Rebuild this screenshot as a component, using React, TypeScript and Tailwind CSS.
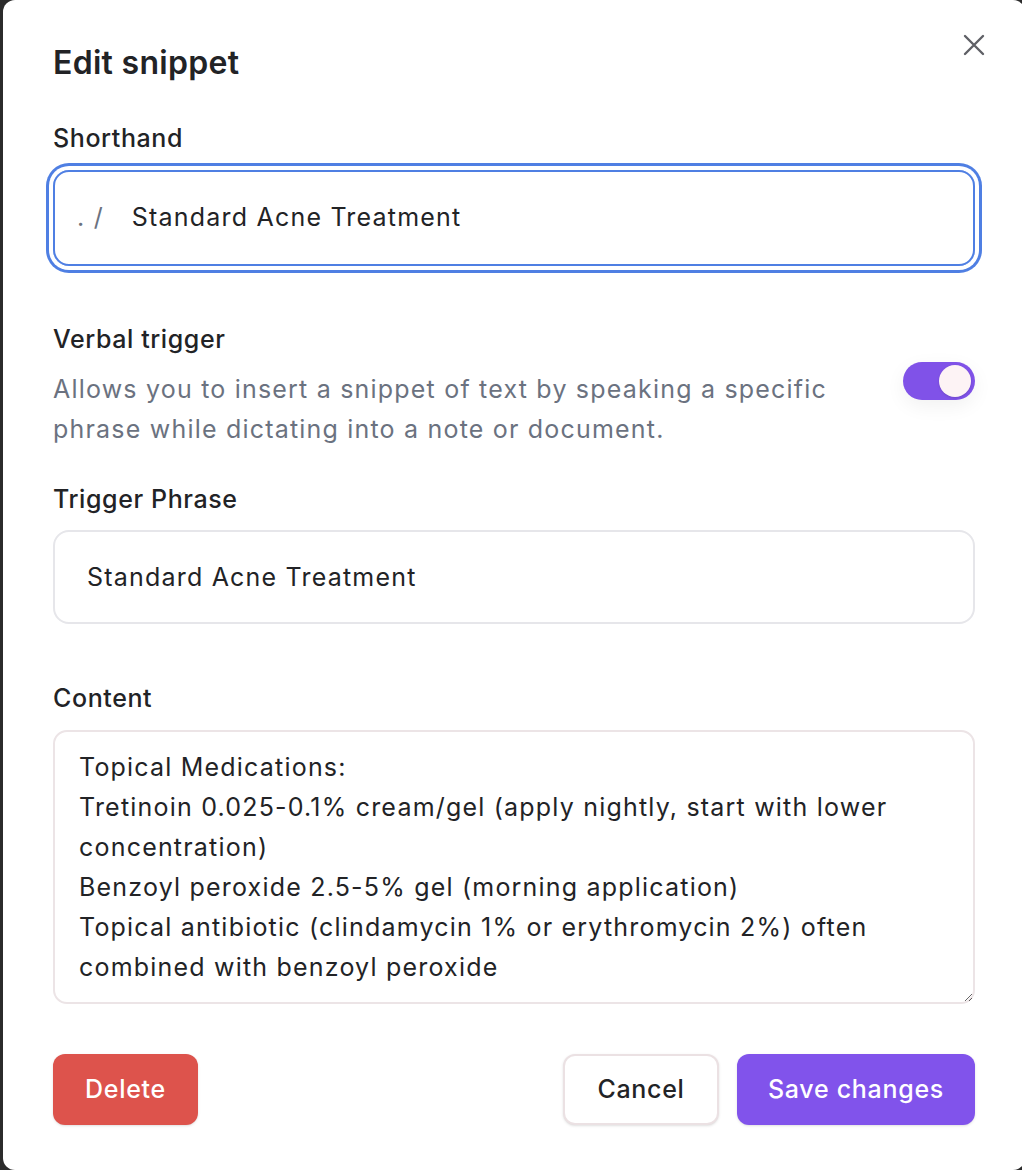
import React from "react";

const font = { fontFamily: "Inter, 'Noto Sans', sans-serif" };

const CloseIcon = () => (
  <svg width="22" height="22" viewBox="0 0 22 22" fill="none">
    <path d="M2 2L20 20M20 2L2 20" stroke="#5f6066" strokeWidth="2.4" strokeLinecap="round" />
  </svg>
);

const Toggle = ({ on }: { on: boolean }) => (
  <div
    className={
      "relative h-[38px] w-[72px] shrink-0 rounded-full shadow-[0_6px_20px_rgba(0,0,0,0.06)] " +
      (on ? "bg-[#8052e8]" : "bg-gray-300")
    }
  >
    <div className="absolute right-[4px] top-[3px] size-[32px] rounded-full bg-[#fdf3f5] shadow-sm" />
  </div>
);

export default function App() {
  return (
    <div className="h-[1170px] w-full overflow-hidden bg-[#2b2b2b]" style={font}>
      <div className="relative ml-[3px] h-[1170px] w-[1022px] rounded-[12px] bg-white px-[50px] pt-[45px] text-[#222326]">
        <button className="absolute right-[40px] top-[34px]">
          <CloseIcon />
        </button>

        <h2 className="text-[32px] font-semibold leading-[36px] tracking-[0.3px]">Edit snippet</h2>

        {/* shorthand */}
        <label className="mt-[41px] block text-[25px] font-medium leading-[32px] tracking-[0.6px]">Shorthand</label>
        <div className="mt-[16px] flex h-[96px] items-center rounded-[16px] border-2 border-[#4f7fe3] pl-[22px] text-[25px] tracking-[1.2px] shadow-[0_0_0_4px_#ffffff,0_0_0_7px_#4f7fe3]">
          <span className="text-[#6b7280]">. /</span>
          <input
            className="ml-[28px] flex-1 bg-transparent tracking-[1.2px] outline-none"
            defaultValue="Standard Acne Treatment"
          />
        </div>

        {/* verbal trigger */}
        <div className="mt-[57px] text-[25px] font-medium leading-[32px] tracking-[0.6px]">Verbal trigger</div>
        <div className="mt-[14px] flex items-start justify-between">
          <p className="w-[790px] text-[25px] leading-[40px] tracking-[1.2px] text-[#6b7280]">
            Allows you to insert a snippet of text by speaking a specific phrase while dictating into a note or document.
          </p>
          <div className="mt-[-7px]">
            <Toggle on />
          </div>
        </div>

        {/* trigger phrase */}
        <label className="mt-[34px] block text-[25px] font-medium leading-[32px] tracking-[0.6px]">Trigger Phrase</label>
        <input
          className="mt-[15px] h-[94px] w-full rounded-[16px] border-2 border-[#e6e6ea] px-[32px] text-[25px] tracking-[1.2px] outline-none"
          defaultValue="Standard Acne Treatment"
        />

        {/* content */}
        <label className="mt-[58px] block text-[25px] font-medium leading-[32px] tracking-[0.6px]">Content</label>
        <textarea
          className="mt-[16px] block h-[274px] w-full resize-y rounded-[14px] border-2 border-[#ece4e6] px-[24px] pt-[15px] text-[25px] leading-[40px] tracking-[1.2px] outline-none"
          defaultValue={
            "Topical Medications:\nTretinoin 0.025-0.1% cream/gel (apply nightly, start with lower concentration)\nBenzoyl peroxide 2.5-5% gel (morning application)\nTopical antibiotic (clindamycin 1% or erythromycin 2%) often combined with benzoyl peroxide"
          }
        />

        {/* footer */}
        <div className="mt-[50px] flex items-center justify-between">
          <button className="h-[71px] w-[145px] rounded-[12px] bg-[#dd534c] text-[25px] font-medium tracking-[0.7px] text-white shadow-sm">
            Delete
          </button>
          <div className="flex gap-[18px]">
            <button className="h-[71px] w-[156px] rounded-[12px] border-2 border-[#ebe1e3] bg-white text-[25px] font-medium tracking-[0.7px] text-[#222326] shadow-sm">
              Cancel
            </button>
            <button className="h-[71px] w-[238px] rounded-[12px] bg-[#8153eb] text-[25px] font-medium tracking-[0.7px] text-white shadow-sm">
              Save changes
            </button>
          </div>
        </div>
      </div>
    </div>
  );
}
